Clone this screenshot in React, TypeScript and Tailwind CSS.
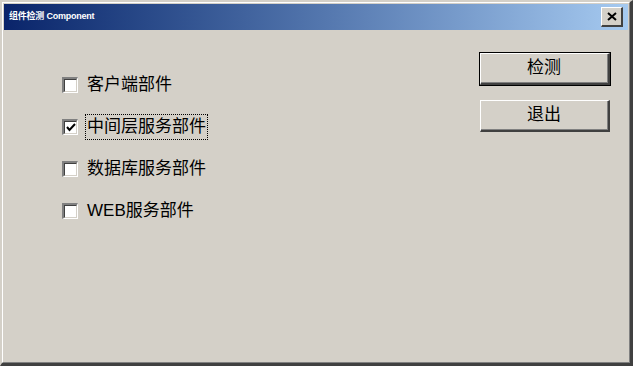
import React from 'react';

const items = [
  { id: 'client', label: '客户端部件', checked: false },
  { id: 'middle', label: '中间层服务部件', checked: true, focused: true },
  { id: 'db', label: '数据库服务部件', checked: false },
  { id: 'web', label: 'WEB服务部件', checked: false },
];

function CheckBox({ checked }: { checked: boolean }) {
  return (
    <div className="w-[16px] h-[16px] border-t-2 border-l-2 border-b border-r border-t-[#808080] border-l-[#808080] border-b-white border-r-white">
      <div className="w-full h-full border-t border-l border-b border-r border-t-[#404040] border-l-[#404040] border-b-[#d4d0c8] border-r-[#d4d0c8] bg-white flex items-center justify-center">
        {checked && (
          <svg width="10" height="9" viewBox="0 0 10 9">
            <path d="M1 4 L3.5 7 L9 1" stroke="#000" strokeWidth="2" fill="none" />
          </svg>
        )}
      </div>
    </div>
  );
}

function Button({ label, isDefault }: { label: string; isDefault?: boolean }) {
  return (
    <div className={isDefault ? 'border border-black' : 'border border-transparent'}>
      <div className="border-t border-l border-b-2 border-r-2 border-t-white border-l-white border-b-[#404040] border-r-[#404040]">
        <div className="h-[29px] border-b border-r border-b-[#808080] border-r-[#808080] flex items-center justify-center text-[17px] text-black">
          {label}
        </div>
      </div>
    </div>
  );
}

export default function App() {
  return (
    <div
      className="w-[635px] h-[368px] bg-white"
      style={{ fontFamily: '"Liberation Sans", "Noto Sans CJK SC", sans-serif' }}
    >
      <div className="w-[633px] h-[366px] border-t-2 border-l-2 border-r-[3px] border-b-[3px] border-t-[#d4d0c8] border-l-[#d4d0c8] border-r-[#404040] border-b-[#404040] bg-[#d4d0c8] flex flex-col">
        <div className="border-t border-l border-r border-b border-t-white border-l-white border-r-[#808080] border-b-[#808080] flex-1 flex flex-col px-[1px] pt-[1px]">
          {/* title bar */}
          <div className="h-[26px] flex items-center justify-between pl-[5px] pr-[5px] bg-gradient-to-r from-[#0a246a] to-[#a6caf0]">
            <span className="text-[9px] font-bold text-white tracking-tight">组件检测 Component</span>
            <div className="w-[22px] h-[20px] bg-[#d4d0c8] border-t border-l border-b-2 border-r-2 border-t-white border-l-white border-b-[#404040] border-r-[#404040] flex items-center justify-center">
              <svg width="10" height="9" viewBox="0 0 10 9">
                <path d="M1 1 L9 8 M9 1 L1 8" stroke="#000" strokeWidth="2" />
              </svg>
            </div>
          </div>

          {/* body */}
          <div className="flex-1 flex pt-[22px]">
            <div className="flex-1 flex flex-col pl-[58px] pt-[22px] gap-[21px]">
              {items.map(item => (
                <div key={item.id} className="flex items-center h-[21px]">
                  <CheckBox checked={item.checked} />
                  <div
                    className={
                      'ml-[7px] px-[1px] h-[26px] flex items-center text-[17px] text-black border border-dotted ' +
                      (item.focused ? 'border-black' : 'border-transparent')
                    }
                  >
                    {item.label}
                  </div>
                </div>
              ))}
            </div>
            <div className="w-[132px] mr-[17px] flex flex-col gap-[13px]">
              <Button label="检测" isDefault />
              <Button label="退出" />
            </div>
          </div>
        </div>
      </div>
    </div>
  );
}
